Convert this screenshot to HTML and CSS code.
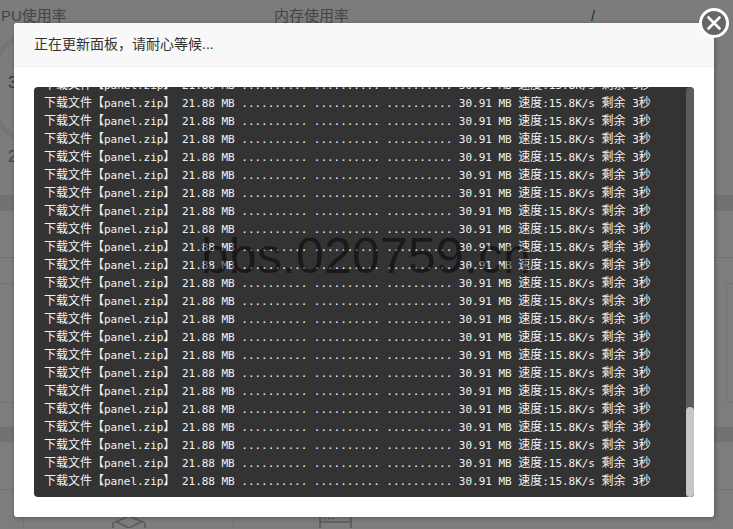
FILE: index.html
```html
<!DOCTYPE html>
<html lang="zh-CN">
<head>
<meta charset="utf-8">
<title>正在更新面板</title>
<link rel="stylesheet" href="styles.css">
</head>
<body>
<main class="page">
  <section class="stats">
    <div class="stat-titles">
      <span class="stat-cpu">PU使用率</span>
      <span class="stat-mem">内存使用率</span>
      <span class="stat-slash">/</span>
    </div>
    <div class="gauge-wrap">
      <svg class="gauge" width="60" height="140" viewBox="0 0 60 140" aria-hidden="true"><circle cx="44" cy="62" r="57" fill="none" stroke="#e8e8e8" stroke-width="5"/></svg>
      <div class="gauge-values"><span class="gauge-pct">3</span><span class="gauge-sub">2</span></div>
    </div>
  </section>
  <div class="band"></div>
  <section class="overview">
    <div class="overview-head"></div>
    <div class="overview-row"></div>
    <div class="cards">
      <div class="card-left"></div>
      <div class="card-right"></div>
    </div>
  </section>
  <div class="band band-second"></div>
  <section class="software">
    <div class="software-head"></div>
    <div class="software-grid">
      <div class="cell cell-first"></div>
      <div class="cell cell-box">
        <svg width="34" height="24" viewBox="0 0 34 24" aria-hidden="true"><path d="M1 9 V24 M33 9 V24 M1 9 L17 2 L33 9 M5 8 L17 14 L29 8" fill="none" stroke="#b4b4b4" stroke-width="1.6"/></svg>
      </div>
      <div class="cell cell-server">
        <svg width="34" height="24" viewBox="0 0 34 24" aria-hidden="true"><path d="M1 0 V24 M32 0 V24 M1 6 H32" fill="none" stroke="#b4b4b4" stroke-width="1.6"/><path d="M5 2.500 H7 M9 2.500 H11 M13 2.500 H15" stroke="#b4b4b4" stroke-width="1.500"/></svg>
      </div>
    </div>
  </section>
</main>

<div class="overlay">
  <div class="modal">
    <header class="modal-head">正在更新面板，请耐心等候...</header>
    <div class="modal-body">
      <div class="terminal">
        <div class="log">
          <div class="line"><span class="zh">下载文件【</span>panel.zip<span class="zh">】</span> 21.88 MB .......... .......... .......... 30.91 MB <span class="zh">速度</span>:15.8K/s <span class="zh">剩余</span> 3<span class="zh">秒</span></div>
          <div class="line"><span class="zh">下载文件【</span>panel.zip<span class="zh">】</span> 21.88 MB .......... .......... .......... 30.91 MB <span class="zh">速度</span>:15.8K/s <span class="zh">剩余</span> 3<span class="zh">秒</span></div>
          <div class="line"><span class="zh">下载文件【</span>panel.zip<span class="zh">】</span> 21.88 MB .......... .......... .......... 30.91 MB <span class="zh">速度</span>:15.8K/s <span class="zh">剩余</span> 3<span class="zh">秒</span></div>
          <div class="line"><span class="zh">下载文件【</span>panel.zip<span class="zh">】</span> 21.88 MB .......... .......... .......... 30.91 MB <span class="zh">速度</span>:15.8K/s <span class="zh">剩余</span> 3<span class="zh">秒</span></div>
          <div class="line"><span class="zh">下载文件【</span>panel.zip<span class="zh">】</span> 21.88 MB .......... .......... .......... 30.91 MB <span class="zh">速度</span>:15.8K/s <span class="zh">剩余</span> 3<span class="zh">秒</span></div>
          <div class="line"><span class="zh">下载文件【</span>panel.zip<span class="zh">】</span> 21.88 MB .......... .......... .......... 30.91 MB <span class="zh">速度</span>:15.8K/s <span class="zh">剩余</span> 3<span class="zh">秒</span></div>
          <div class="line"><span class="zh">下载文件【</span>panel.zip<span class="zh">】</span> 21.88 MB .......... .......... .......... 30.91 MB <span class="zh">速度</span>:15.8K/s <span class="zh">剩余</span> 3<span class="zh">秒</span></div>
          <div class="line"><span class="zh">下载文件【</span>panel.zip<span class="zh">】</span> 21.88 MB .......... .......... .......... 30.91 MB <span class="zh">速度</span>:15.8K/s <span class="zh">剩余</span> 3<span class="zh">秒</span></div>
          <div class="line"><span class="zh">下载文件【</span>panel.zip<span class="zh">】</span> 21.88 MB .......... .......... .......... 30.91 MB <span class="zh">速度</span>:15.8K/s <span class="zh">剩余</span> 3<span class="zh">秒</span></div>
          <div class="line"><span class="zh">下载文件【</span>panel.zip<span class="zh">】</span> 21.88 MB .......... .......... .......... 30.91 MB <span class="zh">速度</span>:15.8K/s <span class="zh">剩余</span> 3<span class="zh">秒</span></div>
          <div class="line"><span class="zh">下载文件【</span>panel.zip<span class="zh">】</span> 21.88 MB .......... .......... .......... 30.91 MB <span class="zh">速度</span>:15.8K/s <span class="zh">剩余</span> 3<span class="zh">秒</span></div>
          <div class="line"><span class="zh">下载文件【</span>panel.zip<span class="zh">】</span> 21.88 MB .......... .......... .......... 30.91 MB <span class="zh">速度</span>:15.8K/s <span class="zh">剩余</span> 3<span class="zh">秒</span></div>
          <div class="line"><span class="zh">下载文件【</span>panel.zip<span class="zh">】</span> 21.88 MB .......... .......... .......... 30.91 MB <span class="zh">速度</span>:15.8K/s <span class="zh">剩余</span> 3<span class="zh">秒</span></div>
          <div class="line"><span class="zh">下载文件【</span>panel.zip<span class="zh">】</span> 21.88 MB .......... .......... .......... 30.91 MB <span class="zh">速度</span>:15.8K/s <span class="zh">剩余</span> 3<span class="zh">秒</span></div>
          <div class="line"><span class="zh">下载文件【</span>panel.zip<span class="zh">】</span> 21.88 MB .......... .......... .......... 30.91 MB <span class="zh">速度</span>:15.8K/s <span class="zh">剩余</span> 3<span class="zh">秒</span></div>
          <div class="line"><span class="zh">下载文件【</span>panel.zip<span class="zh">】</span> 21.88 MB .......... .......... .......... 30.91 MB <span class="zh">速度</span>:15.8K/s <span class="zh">剩余</span> 3<span class="zh">秒</span></div>
          <div class="line"><span class="zh">下载文件【</span>panel.zip<span class="zh">】</span> 21.88 MB .......... .......... .......... 30.91 MB <span class="zh">速度</span>:15.8K/s <span class="zh">剩余</span> 3<span class="zh">秒</span></div>
          <div class="line"><span class="zh">下载文件【</span>panel.zip<span class="zh">】</span> 21.88 MB .......... .......... .......... 30.91 MB <span class="zh">速度</span>:15.8K/s <span class="zh">剩余</span> 3<span class="zh">秒</span></div>
          <div class="line"><span class="zh">下载文件【</span>panel.zip<span class="zh">】</span> 21.88 MB .......... .......... .......... 30.91 MB <span class="zh">速度</span>:15.8K/s <span class="zh">剩余</span> 3<span class="zh">秒</span></div>
          <div class="line"><span class="zh">下载文件【</span>panel.zip<span class="zh">】</span> 21.88 MB .......... .......... .......... 30.91 MB <span class="zh">速度</span>:15.8K/s <span class="zh">剩余</span> 3<span class="zh">秒</span></div>
          <div class="line"><span class="zh">下载文件【</span>panel.zip<span class="zh">】</span> 21.88 MB .......... .......... .......... 30.91 MB <span class="zh">速度</span>:15.8K/s <span class="zh">剩余</span> 3<span class="zh">秒</span></div>
          <div class="line"><span class="zh">下载文件【</span>panel.zip<span class="zh">】</span> 21.88 MB .......... .......... .......... 30.91 MB <span class="zh">速度</span>:15.8K/s <span class="zh">剩余</span> 3<span class="zh">秒</span></div>
          <div class="line"><span class="zh">下载文件【</span>panel.zip<span class="zh">】</span> 21.88 MB .......... .......... .......... 30.91 MB <span class="zh">速度</span>:15.8K/s <span class="zh">剩余</span> 3<span class="zh">秒</span></div>
        </div>
        <div class="scroll-track"><div class="scroll-thumb"></div></div>
      </div>
    </div>
    <button class="close" type="button" aria-label="关闭">
      <svg width="30" height="30" viewBox="0 0 30 30" aria-hidden="true"><circle cx="15" cy="15" r="13.500" fill="#666" stroke="#fff" stroke-width="3"/><path d="M9.500 9.500 L20.500 20.500 M20.500 9.500 L9.500 20.500" stroke="#fff" stroke-width="2.600" stroke-linecap="round"/></svg>
    </button>
  </div>
  <div class="watermark">bbs.020759.cn</div>
</div>
</body>
</html>
```
FILE: styles.css
```css
* { box-sizing: border-box; }
html, body { margin: 0; height: 100%; overflow: hidden; }
body {
  background: #fff;
  font-family: "Liberation Sans", "Noto Sans CJK SC", sans-serif;
  color: #333;
}
.page { height: 529px; overflow: hidden; background: #f8f8f8; }

.stats { height: 195px; padding-top: 6px; overflow: hidden; }
.stat-titles { display: flex; align-items: center; height: 20px; font-size: 15px; color: #8a8a8a; line-height: 20px; }
.stat-cpu { width: 274px; padding-left: 1px; }
.stat-mem { width: 317px; }
.stat-slash { color: #006a70; font-size: 14px; }
.gauge-wrap { display: flex; height: 140px; }
.gauge { flex: none; }
.gauge-values { display: flex; flex-direction: column; margin-left: -52px; padding-top: 47px; font-size: 16px; line-height: 20px; }
.gauge-pct { color: #20a53a; }
.gauge-sub { color: #8a8a8a; margin-top: 54px; }

.band { height: 16px; background: #e4e4e4; }
.band-second { height: 15px; }

.overview { height: 216px; background: #fafafa; }
.overview-head { height: 47px; border-bottom: 1px solid #e0e0e0; }
.overview-row { height: 25px; }
.cards { display: flex; justify-content: space-between; height: 120px; }
.card-left { width: 100px; border-top: 1px solid #e6e6e6; border-bottom: 1px solid #e6e6e6; }
.card-right { width: 30px; margin-right: -23px; border: 1px solid #e6e6e6; border-radius: 3px; }

.software { height: 87px; background: #fafafa; }
.software-head { height: 48px; border-bottom: 1px solid #e6e6e6; }
.software-grid { display: grid; grid-template-columns: 24px 210px 200px 1fr; height: 38px; }
.cell { border-right: 1px solid #e6e6e6; padding-top: 24px; overflow: hidden; }
.cell-box { padding-left: 88px; }
.cell-box svg, .cell-server svg { display: block; }
.cell-server { padding-left: 85px; padding-top: 26px; border-right: 0; }

.overlay { position: absolute; inset: 0; background: rgba(0, 0, 0, .5); }
.modal {
  position: absolute;
  left: 14px;
  top: 23px;
  width: 700px;
  height: 494px;
  display: flex;
  flex-direction: column;
  background: #fff;
  border-radius: 3px;
  box-shadow: 1px 1px 5px rgba(0, 0, 0, .3);
}
.modal-head {
  height: 44px;
  padding: 0 20px;
  background: #f8f8f8;
  border-bottom: 1px solid #eee;
  border-radius: 3px 3px 0 0;
  font-size: 14px;
  line-height: 43px;
  color: #333;
}
.modal-body { flex: 1; padding: 20px; min-height: 0; }
.terminal {
  display: flex;
  height: 410px;
  background: #333;
  border-radius: 4px;
  overflow: hidden;
}
.log {
  flex: 1;
  min-width: 0;
  display: flex;
  flex-direction: column;
  justify-content: flex-end;
  padding: 0 10px 8px;
  overflow: hidden;
}
.line {
  flex: none;
  height: 18px;
  line-height: 18px;
  white-space: pre;
  font-family: "DejaVu Sans Mono", "Noto Sans CJK SC", monospace;
  font-size: 11px;
  letter-spacing: -.03px;
  color: #f2f2f2;
}
.zh { font-family: "Noto Sans CJK SC", sans-serif; font-size: 12px; letter-spacing: 0; }
.scroll-track {
  flex: none;
  width: 8px;
  display: flex;
  flex-direction: column;
  justify-content: flex-end;
  background: #5b5b5b;
  border-radius: 4px 4px 0 0;
}
.scroll-thumb { height: 90px; background: #c6c6c6; border-radius: 4px; }
.close {
  position: absolute;
  right: -15px;
  top: -15px;
  width: 30px;
  height: 30px;
  padding: 0;
  border: 0;
  background: none;
}
.close svg { display: block; }
.watermark {
  position: absolute;
  left: 201px;
  top: 227px;
  font-family: "Liberation Sans", sans-serif;
  font-size: 50px;
  letter-spacing: .15px;
  line-height: 58px;
  color: rgba(0, 0, 0, .5);
  pointer-events: none;
}
```
